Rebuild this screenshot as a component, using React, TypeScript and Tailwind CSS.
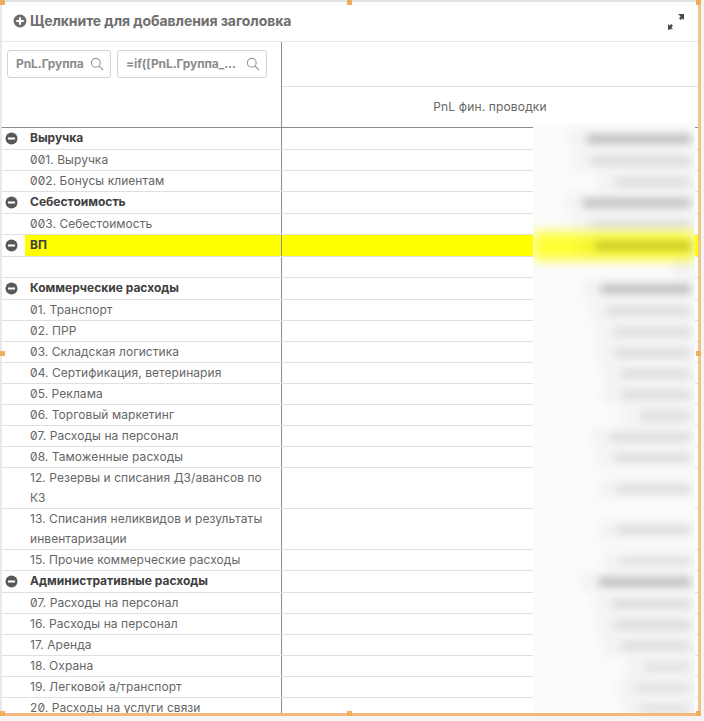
const rows: { label: string; head?: boolean; yellow?: boolean; tall?: boolean; bar: number; tone: number }[] = [
  { label: 'Выручка', head: true, bar: 104, tone: 0.24 },
  { label: '001. Выручка', bar: 100, tone: 0.1 },
  { label: '002. Бонусы клиентам', bar: 76, tone: 0.09 },
  { label: 'Себестоимость', head: true, bar: 108, tone: 0.22 },
  { label: '003. Себестоимость', bar: 100, tone: 0.09 },
  { label: 'ВП', head: true, yellow: true, bar: 96, tone: 0.2 },
  { label: '', bar: 0, tone: 0 },
  { label: 'Коммерческие расходы', head: true, bar: 90, tone: 0.24 },
  { label: '01. Транспорт', bar: 84, tone: 0.09 },
  { label: '02. ПРР', bar: 76, tone: 0.09 },
  { label: '03. Складская логистика', bar: 76, tone: 0.09 },
  { label: '04. Сертификация, ветеринария', bar: 70, tone: 0.09 },
  { label: '05. Реклама', bar: 70, tone: 0.09 },
  { label: '06. Торговый маркетинг', bar: 50, tone: 0.09 },
  { label: '07. Расходы на персонал', bar: 80, tone: 0.09 },
  { label: '08. Таможенные расходы', bar: 76, tone: 0.09 },
  { label: '12. Резервы и списания ДЗ/авансов по КЗ', tall: true, bar: 74, tone: 0.09 },
  { label: '13. Списания неликвидов и результаты инвентаризации', tall: true, bar: 74, tone: 0.09 },
  { label: '15. Прочие коммерческие расходы', bar: 70, tone: 0.07 },
  { label: 'Административные расходы', head: true, bar: 92, tone: 0.24 },
  { label: '07. Расходы на персонал', bar: 78, tone: 0.1 },
  { label: '16. Расходы на персонал', bar: 76, tone: 0.1 },
  { label: '17. Аренда', bar: 70, tone: 0.09 },
  { label: '18. Охрана', bar: 46, tone: 0.07 },
  { label: '19. Легковой а/транспорт', bar: 56, tone: 0.07 },
  { label: '20. Расходы на услуги связи', bar: 50, tone: 0.07 },
]

function Collapse() {
  return (
    <svg width="13" height="13" viewBox="0 0 13 13" className="shrink-0">
      <circle cx="6.5" cy="6.5" r="6" fill="#595959" />
      <rect x="3" y="5.5" width="7" height="2" fill="#fff" />
    </svg>
  )
}

function Search() {
  return (
    <svg width="14" height="14" viewBox="0 0 14 14" fill="none" stroke="#9a9a9a" strokeWidth="1.1" className="shrink-0">
      <circle cx="5.8" cy="5.8" r="4.4" />
      <path d="M9 9l4 4" />
    </svg>
  )
}

function Filter({ text, width }: { text: string; width: string }) {
  return (
    <div className={`flex h-[28px] items-center justify-between rounded-[3px] border border-[#d4d4d4] pl-[8px] pr-[6px] ${width}`}>
      <span className="text-[12px] font-bold tracking-[-0.1px] text-[#8c8c8c]">{text}</span>
      <Search />
    </div>
  )
}

export default function App() {
  return (
    <div className="relative h-[721px] w-[704px] overflow-hidden bg-[#f4f4f4] font-['Inter','Liberation_Sans',sans-serif] text-[#666666] slashed-zero">
      <div className="flex h-[713px] w-[698px] flex-col overflow-hidden bg-white pl-[1px]">
        <div className="flex h-[42px] shrink-0 items-center justify-between border-b border-[#e6e6e6] pl-[12px] pr-[13px]">
          <div className="flex items-center gap-[3px]">
            <svg width="14" height="14" viewBox="0 0 13 13">
              <circle cx="6.5" cy="6.5" r="6" fill="#6e6e6e" />
              <path d="M3 5.5h2.5V3h2v2.5H10v2H7.5V10h-2V7.5H3z" fill="#fff" />
            </svg>
            <span className="text-[14px] font-bold tracking-[-0.08px] text-[#6e6e6e]">Щелкните для добавления заголовка</span>
          </div>
          <svg width="18" height="18" viewBox="0 0 18 18" fill="#4a4a4a" className="mt-[2px]">
            <path d="M11 1h6v6l-1.6-1.6-1.6 1.6-1.8-1.8 1.6-1.6z" />
            <path d="M1 17v-6l1.6 1.6 1.6-1.6 1.8 1.8-1.6 1.6L6 15.6z" />
          </svg>
        </div>
        <div className="flex h-[86px] shrink-0 border-b border-[#8c8c8c]">
          <div className="flex w-[281px] shrink-0 gap-[6px] border-r border-[#8c8c8c] pl-[6px] pt-[8px]">
            <Filter text="PnL.Группа" width="w-[104px]" />
            <Filter text="=if([PnL.Группа_..." width="w-[150px]" />
          </div>
          <div className="flex flex-1 flex-col">
            <div className="h-[45px] border-b border-[#e0e0e0]" />
            <div className="flex flex-1 items-center justify-center text-[12px] tracking-[0.15px] text-[#666]">PnL фин. проводки</div>
          </div>
        </div>
        {rows.map((r, i) => (
          <div key={i} className={`flex shrink-0 border-b border-[#e0e0e0] ${r.tall ? 'h-[41px]' : r.head ? 'h-[22px]' : 'h-[21px]'}`}>
            <div className="flex w-[281px] shrink-0 border-r border-[#8c8c8c]">
              <div className="flex w-[24px] shrink-0 items-center pl-[4px] pb-[1px]">{r.head && <Collapse />}</div>
              <div className={`flex flex-1 items-center pl-[5px] pr-[8px] text-[12px] leading-[20px] ${r.head ? 'pb-[2px] font-bold text-[#404040]' : 'tracking-[0.06px]'} ${r.yellow ? 'bg-[#ffff00]' : ''}`}>
                {r.label}
              </div>
            </div>
            <div className={`flex-1 ${r.yellow ? 'bg-[#ffff00]' : ''}`} />
          </div>
        ))}
      </div>

      {/* blurred values */}
      <div className="absolute left-[533px] top-[123px] flex h-[590px] w-[162px] flex-col overflow-hidden bg-[#fbfbfb] pt-[5px]">
        {rows.map((r, i) => (
          <div key={i} className={`relative flex shrink-0 items-center justify-end pr-[4px] ${r.tall ? 'h-[41px]' : r.head ? 'h-[22px]' : 'h-[21px]'}`}>
            {r.yellow && <div className="absolute -top-[3px] -bottom-[3px] left-0 right-0 bg-[#ffff33] blur-[6px]" />}
            <div className="absolute right-0 h-[18px] bg-black blur-[7px]" style={{ width: r.bar + 22, opacity: 0.04 }} />
            <div className="relative h-[8px] bg-black blur-[4px]" style={{ width: r.bar, opacity: r.tone }} />
          </div>
        ))}
      </div>

      {/* selection frame */}
      <div className="absolute left-[698px] top-0 h-[716px] w-[3px] bg-[#f2c48e]" />
      <div className="absolute bottom-[5px] left-0 h-[3px] w-[700px] bg-[#f2b978]" />
      <div className="absolute left-0 top-0 h-[2px] w-[698px] bg-[#e3e3e3]" />
      <div className="absolute left-0 top-0 h-[713px] w-[2px] bg-[#e8e8e8]" />
      {[
        'left-0 top-0', 'left-[347px] top-0', 'left-[696px] top-0',
        'left-0 top-[351px]', 'left-[696px] top-[351px]',
        'left-0 top-[711px]', 'left-[347px] top-[711px]', 'left-[696px] top-[711px]',
      ].map((p) => (
        <div key={p} className={`absolute h-[5px] w-[5px] bg-[#f0ad5e] ${p}`} />
      ))}
    </div>
  )
}
